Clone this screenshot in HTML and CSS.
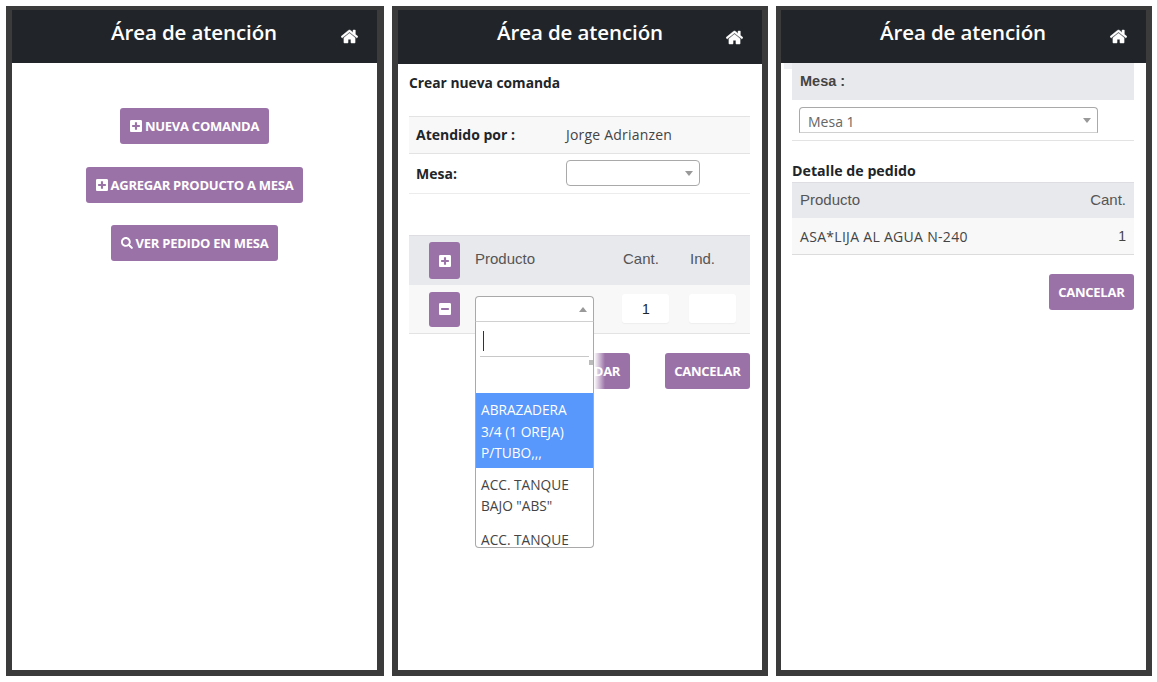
FILE: index.html
```html
<!DOCTYPE html>
<html lang="es">
<head>
<meta charset="utf-8">
<title>Área de atención</title>
<link rel="stylesheet" href="styles.css">
</head>
<body>
<svg class="defs" aria-hidden="true">
  <symbol id="home" viewBox="0 0 576 512"><path d="M280.37 148.26L96 300.11V464a16 16 0 0 0 16 16l112.06-.29a16 16 0 0 0 15.92-16V368a16 16 0 0 1 16-16h64a16 16 0 0 1 16 16v95.64a16 16 0 0 0 16 16.05L464 480a16 16 0 0 0 16-16V300L295.67 148.26a12.19 12.19 0 0 0-15.3 0zM571.6 251.47L488 182.56V44.05a12 12 0 0 0-12-12h-56a12 12 0 0 0-12 12v72.61L318.47 43a48 48 0 0 0-61 0L4.34 251.47a12 12 0 0 0-1.6 16.9l25.5 31A12 12 0 0 0 45.15 301l235.22-193.74a12.19 12.19 0 0 1 15.3 0L530.9 301a12 12 0 0 0 16.9-1.6l25.5-31a12 12 0 0 0-1.7-16.93z"/></symbol>
  <symbol id="plus" viewBox="0 0 448 512"><path d="M400 32H48C21.5 32 0 53.5 0 80v352c0 26.5 21.5 48 48 48h352c26.5 0 48-21.5 48-48V80c0-26.5-21.5-48-48-48zm-32 252c0 6.6-5.4 12-12 12h-92v92c0 6.6-5.4 12-12 12h-56c-6.6 0-12-5.4-12-12v-92H92c-6.6 0-12-5.4-12-12v-56c0-6.6 5.4-12 12-12h92v-92c0-6.6 5.4-12 12-12h56c6.6 0 12 5.4 12 12v92h92c6.6 0 12 5.4 12 12v56z"/></symbol>
  <symbol id="minus" viewBox="0 0 448 512"><path d="M400 32H48C21.5 32 0 53.5 0 80v352c0 26.5 21.5 48 48 48h352c26.5 0 48-21.5 48-48V80c0-26.5-21.5-48-48-48zM92 296c-6.6 0-12-5.4-12-12v-56c0-6.6 5.4-12 12-12h264c6.6 0 12 5.4 12 12v56c0 6.6-5.4 12-12 12H92z"/></symbol>
  <symbol id="search" viewBox="0 0 512 512"><path d="M505 442.7L405.3 343c-4.5-4.5-10.6-7-17-7H372c27.6-35.3 44-79.7 44-128C416 93.1 322.9 0 208 0S0 93.1 0 208s93.1 208 208 208c48.3 0 92.7-16.4 128-44v16.3c0 6.4 2.5 12.5 7 17l99.7 99.7c9.4 9.4 24.6 9.4 33.9 0l28.3-28.3c9.4-9.4 9.4-24.6.1-34zM208 336c-70.7 0-128-57.2-128-128 0-70.7 57.2-128 128-128 70.7 0 128 57.2 128 128 0 70.7-57.2 128-128 128z"/></symbol>
</svg>

<main class="screens">
  <!-- Pantalla 1 -->
  <section class="phone phone-a">
    <header class="topbar">
      <h1 class="topbar-title">Área de atención</h1>
      <svg class="home-icon"><use href="#home"/></svg>
    </header>
    <div class="menu">
      <a class="btn"><svg class="btn-icon"><use href="#plus"/></svg>NUEVA COMANDA</a>
      <a class="btn"><svg class="btn-icon"><use href="#plus"/></svg>AGREGAR PRODUCTO A MESA</a>
      <a class="btn"><svg class="btn-icon"><use href="#search"/></svg>VER PEDIDO EN MESA</a>
    </div>
  </section>

  <!-- Pantalla 2 -->
  <section class="phone phone-b">
    <header class="topbar topbar-tall">
      <h1 class="topbar-title topbar-title-high">Área de atención</h1>
      <svg class="home-icon home-icon-low"><use href="#home"/></svg>
    </header>
    <div class="order">
      <h2 class="order-title">Crear nueva comanda</h2>
      <div class="info-row info-striped">
        <span class="info-label">Atendido por :</span>
        <span class="info-value">Jorge Adrianzen</span>
      </div>
      <div class="info-row info-mesa">
        <span class="info-label">Mesa:</span>
        <div class="select select-mesa"><span class="caret"></span></div>
      </div>
      <div class="lines">
        <div class="lines-head">
          <span class="square-btn"><svg class="square-icon"><use href="#plus"/></svg></span>
          <span class="col-product">Producto</span>
          <span class="col-qty">Cant.</span>
          <span class="col-ind">Ind.</span>
        </div>
        <div class="lines-row">
          <span class="square-btn square-btn-low"><svg class="square-icon"><use href="#minus"/></svg></span>
          <div class="select select-product"><span class="caret caret-up"></span></div>
          <div class="cell-input cell-qty">1</div>
          <div class="cell-input cell-ind"></div>
          <div class="dropdown">
            <div class="dropdown-search"><span class="cursor"></span></div>
            <span class="scroll-tick"></span>
            <div class="dropdown-option dropdown-blank"></div>
            <div class="dropdown-option dropdown-active">ABRAZADERA 3/4 (1 OREJA) P/TUBO,,,</div>
            <div class="dropdown-option">ACC. TANQUE BAJO "ABS"</div>
            <div class="dropdown-option">ACC. TANQUE</div>
          </div>
        </div>
      </div>
      <div class="actions">
        <a class="btn btn-slim btn-save">GUARDAR</a>
        <a class="btn btn-slim">CANCELAR</a>
      </div>
    </div>
  </section>

  <!-- Pantalla 3 -->
  <section class="phone phone-c">
    <header class="topbar">
      <h1 class="topbar-title">Área de atención</h1>
      <svg class="home-icon"><use href="#home"/></svg>
    </header>
    <div class="detail">
      <div class="detail-mesa">Mesa :</div>
      <div class="detail-select-row">
        <div class="select select-wide"><span class="select-text">Mesa 1</span><span class="caret"></span></div>
      </div>
      <h2 class="detail-title">Detalle de pedido</h2>
      <div class="detail-head"><span>Producto</span><span>Cant.</span></div>
      <div class="detail-row"><span class="detail-name">ASA*LIJA AL AGUA N-240</span><span class="detail-qty">1</span></div>
      <div class="detail-actions"><a class="btn btn-slim">CANCELAR</a></div>
    </div>
  </section>
</main>
</body>
</html>
```
FILE: styles.css
```css
* { box-sizing: border-box; }
html, body { margin: 0; padding: 0; background: #fff; }
body { width: 1157px; height: 682px; overflow: hidden; font-family: "Open Sans", "Noto Sans", sans-serif; color: #212529; }
.defs { display: none; }

.screens { display: flex; gap: 8px; padding: 6px 0 0 6px; }
.phone { height: 670px; background: #fff; border: solid #3b3b3b; border-width: 4px 7px 6px 6px; display: flex; flex-direction: column; }
.phone-a { width: 378px; }
.phone-b { width: 376px; border-width: 4px 6px 6px 6px; }
.phone-c { width: 376px; border-width: 4px 6px 6px 5px; }

.topbar { height: 53px; flex: none; background: #212529; display: flex; align-items: center; position: relative; }
.topbar-tall { height: 54px; }
.topbar-title { margin: -9px 0 0 99px; font-size: 20.5px; line-height: 28px; font-weight: 600; color: #fff; letter-spacing: -0.1px; }
.topbar-title-high { margin-top: -10px; }
.home-icon { width: 17px; height: 15px; fill: #fff; stroke: #fff; stroke-width: 14px; position: absolute; right: 19px; top: 19px; overflow: visible; }
.home-icon-low { top: 20px; }

.btn { display: inline-flex; align-items: center; justify-content: center; height: 36px; padding: 0 10px; border-radius: 3px; background: #9b72a8; color: #fff; font-size: 13px; font-weight: 700; letter-spacing: -0.25px; white-space: nowrap; }
.btn-slim { padding: 0 9.5px; }
.btn-icon { width: 12px; height: 14px; fill: #fff; margin-right: 3px; flex: none; }

.menu { display: flex; flex-direction: column; align-items: center; padding-top: 45px; gap: 22.5px; }

.order { padding: 0 12px 0 11px; position: relative; }
.order-title { margin: 0; padding-top: 9px; height: 52px; font-size: 13.8px; line-height: 19px; font-weight: 700; color: #212529; }
.info-row { display: flex; align-items: center; padding-left: 7px; border-top: 1px solid #e3e3e3; font-size: 14px; }
.info-striped { height: 37px; padding-bottom: 2px; background: #f8f8f9; }
.info-mesa { height: 41px; padding-bottom: 1px; border-bottom: 1px solid #ececec; }
.info-label { width: 150px; font-weight: 700; }
.info-value { color: #444; letter-spacing: 0.2px; }

.select { position: relative; height: 26px; background: #fff; border: 1px solid #a9a9a9; border-radius: 4px; }
.select-mesa { width: 134px; }
.select-product { width: 119px; margin-left: 15px; border-bottom-color: #d0d0d0; border-radius: 4px 4px 0 0; margin-top: -1px; }
.select-wide { width: 299px; border-bottom-color: #d0d0d0; border-radius: 4px 4px 0 0; display: flex; align-items: center; padding: 2px 0 0 8px; }
.select-text { font-size: 14px; color: #666; }
.caret { position: absolute; right: 6px; top: 10px; width: 0; height: 0; border-left: 4px solid transparent; border-right: 4px solid transparent; border-top: 5px solid #999; }
.caret-up { border-top: 0; border-bottom: 5px solid #999; }

.lines { margin-top: 41px; font-family: "Liberation Sans", Arial, sans-serif; font-size: 15px; color: #555; }
.lines-head { height: 50px; padding-bottom: 5px; background: #e8e9ed; border-top: 1px solid #dedee2; display: flex; align-items: center; padding-left: 20px; }
.square-btn { width: 31px; height: 37px; flex: none; border-radius: 3px; background: #9b72a8; display: flex; align-items: center; justify-content: center; }
.lines-head .square-btn { margin-top: 5px; }
.square-btn-low { height: 35px; }
.square-icon { width: 12px; height: 14px; fill: #fff; }
.col-product { margin-left: 15px; width: 148px; }
.col-qty { width: 67px; }
.lines-row { position: relative; height: 49px; background: #f8f8f9; border-bottom: 1px solid #e3e3e3; display: flex; align-items: center; padding-left: 20px; }
.cell-input { width: 47px; height: 29px; padding-left: 1px; background: #fff; border-radius: 3px; box-shadow: 0 1px 1px #eee; display: flex; align-items: center; justify-content: center; font-size: 14px; color: #212529; margin-top: -1px; }
.cell-qty { margin-left: 28px; }
.cell-ind { margin-left: 20px; }

.dropdown { position: absolute; z-index: 5; left: 66px; top: 36px; width: 119px; height: 227px; background: #fff; border: 1px solid #a9a9a9; border-top: 1px solid #d0d0d0; border-radius: 0 0 4px 4px; overflow: hidden; font-family: "Open Sans", sans-serif; font-size: 13.7px; line-height: 21.5px; color: #444; }
.dropdown-search { height: 35px; margin: 0 4px; border-bottom: 1px solid #c8c8c8; position: relative; }
.cursor { position: absolute; left: 3px; top: 9px; width: 1px; height: 20px; background: #333; }
.scroll-tick { position: absolute; right: 0; top: 38px; width: 4px; height: 5px; background: #bbb; }
.dropdown-option { padding: 5.5px 5px 6.5px; }
.dropdown-blank { height: 36px; padding: 0; }
.dropdown-active { background: #5897fb; color: #fff; padding: 6px 5px 4.5px; }

.actions { display: flex; justify-content: flex-end; gap: 35px; margin-top: 19px; }
.btn-save { background: linear-gradient(to left, #9b72a8 25px, #fff 36px); }

.detail { padding: 0 12px 0 11px; display: flex; flex-direction: column; }
.detail-mesa { position: relative; height: 37px; background: #e8e9ed; padding: 8px 8px 0; font-family: "Liberation Sans", Arial, sans-serif; font-size: 14.5px; line-height: 20px; font-weight: 700; color: #444; }
.detail-mesa::before { content: ""; position: absolute; left: -8px; top: 0; width: 8px; height: 6px; background: #eef0f3; }
.detail-select-row { height: 41px; padding: 7px 0 0 7px; border-bottom: 1px solid #e3e3e3; }
.detail-title { margin: 20px 0 0; font-size: 14.2px; line-height: 20px; font-weight: 700; }
.detail-head { height: 36px; margin-top: 1px; padding: 0 8px 2px; background: #e8e9ed; border-top: 1px solid #dedee2; display: flex; align-items: center; justify-content: space-between; font-family: "Liberation Sans", Arial, sans-serif; font-size: 15px; color: #555; }
.detail-row { height: 37px; background: #f8f8f9; border-bottom: 1px solid #dcdcdc; display: flex; align-items: center; justify-content: space-between; padding: 0 8px; font-size: 14px; color: #444; }
.detail-name { letter-spacing: 0.3px; }
.detail-qty { font-family: "Liberation Sans", Arial, sans-serif; }
.detail-actions { display: flex; justify-content: flex-end; margin-top: 19px; }
```
